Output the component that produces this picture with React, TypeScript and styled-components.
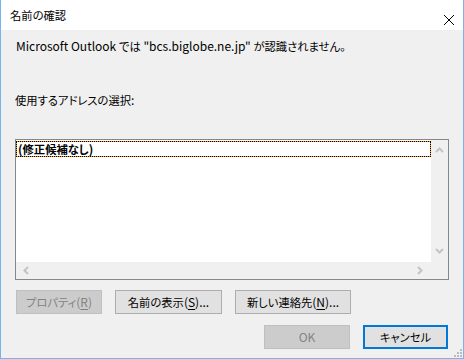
import styled, { createGlobalStyle, css } from "styled-components";

const GlobalStyle = createGlobalStyle`
  html, body {
    margin: 0;
    padding: 0;
    background: #f0f0f0;
  }
  * {
    box-sizing: border-box;
  }
`;

// ===== styled-components =====

const Window = styled.div`
  position: relative;
  width: 464px;
  height: 359px;
  display: flex;
  flex-direction: column;
  background: #f0f0f0;
  border: 1px solid #78b4ec;
  border-top: none;
  font-family: "Noto Sans CJK JP", "Noto Sans", sans-serif;
  font-feature-settings: "palt";
  font-size: 12px;
  color: #000;
`;

const TitleBar = styled.div`
  height: 30px;
  flex: none;
  display: flex;
  align-items: center;
  justify-content: space-between;
  background: #ffffff;
  padding: 0 9px 0 9px;
`;

const Title = styled.span`
  line-height: 16px;
`;

// CJK runs are a touch narrower in the original UI font
const Ja = styled.span`
  font-size: 11.3px;
`;

const CloseButton = styled.div`
  width: 10px;
  height: 10px;
  margin-top: 1px;
`;

const Body = styled.div`
  flex: 1;
  display: flex;
  flex-direction: column;
  padding: 8px 15px 0 14px;
`;

const Message = styled.div`
  line-height: 16px;
  padding-left: 1px;
`;

const Label = styled.div`
  line-height: 16px;
  margin-top: 38px;
`;

const ListBox = styled.div`
  margin-top: 31px;
  width: 434px;
  height: 141px;
  border: 1px solid #828790;
  display: grid;
  grid-template-columns: 1fr 17px;
  grid-template-rows: 1fr 17px;
  background: #ffffff;
`;

const Items = styled.div`
  padding: 1px 0 0 0;
`;

const Item = styled.div`
  height: 16px;
  line-height: 14px;
  padding-left: 1px;
  font-weight: bold;
  border: 1px dotted #000;
  background: linear-gradient(#ffffff, #ffffff) padding-box, #f39a1e border-box;
`;

const VScroll = styled.div`
  background: #f0f0f0;
  display: flex;
  flex-direction: column;
  justify-content: space-between;
  align-items: center;
  padding: 6px 0 6px 0;
`;

const HScroll = styled.div`
  background: #f0f0f0;
  display: flex;
  justify-content: space-between;
  align-items: center;
  padding: 0 6px 0 6px;
`;

const Corner = styled.div`
  background: #f0f0f0;
`;

const ButtonRow = styled.div<{ $end?: boolean }>`
  display: flex;
  gap: 13px;
  justify-content: ${({ $end }) => ($end ? "flex-end" : "flex-start")};
  padding-left: ${({ $end }) => ($end ? "0" : "1px")};
  margin-top: ${({ $end }) => ($end ? "11px" : "10px")};
`;

const Button = styled.div<{ $w: number; $disabled?: boolean; $default?: boolean }>`
  width: ${({ $w }) => $w}px;
  height: 24px;
  display: flex;
  align-items: center;
  justify-content: center;
  background: #e1e1e1;
  border: 1px solid #adadad;
  line-height: 16px;
  padding-bottom: 1px;

  ${({ $disabled }) =>
    $disabled &&
    css`
      background: #cccccc;
      border-color: #bfbfbf;
      color: #838383;
    `}

  ${({ $default }) =>
    $default &&
    css`
      border: 2px solid #0078d7;
    `}
`;

const Key = styled.span`
  text-decoration: underline;
  text-underline-offset: 2px;
`;

const Grip = styled.svg`
  position: absolute;
  right: 1px;
  bottom: 1px;
`;

// ===== icons =====

function Chevron({ dir }: { dir: "up" | "down" | "left" | "right" }) {
  const paths: Record<string, string> = {
    up: "M1 6 L4.5 2.5 L8 6",
    down: "M1 2 L4.5 5.5 L8 2",
    left: "M6 1 L2.5 4.5 L6 8",
    right: "M2 1 L5.5 4.5 L2 8",
  };
  return (
    <svg width="9" height="9" viewBox="0 0 9 9">
      <path d={paths[dir]} fill="none" stroke="#c4c4c4" strokeWidth="2" />
    </svg>
  );
}

// ===== component =====

export default function App() {
  return (
    <>
      <GlobalStyle />
      <Window>
        <TitleBar>
          <Title>
            <Ja>名前の確認</Ja>
          </Title>
          <CloseButton>
            <svg width="10" height="10" viewBox="0 0 10 10">
              <path d="M0 0 L10 10 M10 0 L0 10" stroke="#000" strokeWidth="1" />
            </svg>
          </CloseButton>
        </TitleBar>

        <Body>
          <Message>
            Microsoft Outlook <Ja>では</Ja> "bcs.biglobe.ne.jp" <Ja>が認識されません。</Ja>
          </Message>
          <Label>
            <Ja>使用するアドレスの選択</Ja>:
          </Label>

          <ListBox>
            <Items>
              <Item>
                (<Ja>修正候補なし</Ja>)
              </Item>
            </Items>
            <VScroll>
              <Chevron dir="up" />
              <Chevron dir="down" />
            </VScroll>
            <HScroll>
              <Chevron dir="left" />
              <Chevron dir="right" />
            </HScroll>
            <Corner />
          </ListBox>

          <ButtonRow>
            <Button $w={86} $disabled>
              <Ja>プロパティ</Ja>(<Key>R</Key>)
            </Button>
            <Button $w={107}>
              <Ja>名前の表示</Ja>(<Key>S</Key>)...
            </Button>
            <Button $w={116}>
              <Ja>新しい連絡先</Ja>(<Key>N</Key>)...
            </Button>
          </ButtonRow>

          <ButtonRow $end>
            <Button $w={86} $disabled>
              OK
            </Button>
            <Button $w={85} $default>
              <Ja>キャンセル</Ja>
            </Button>
          </ButtonRow>
        </Body>

        <Grip width="8" height="8" viewBox="0 0 8 8">
          <rect x="6" y="0" width="2" height="2" fill="#bcbcbc" />
          <rect x="3" y="3" width="2" height="2" fill="#bcbcbc" />
          <rect x="6" y="3" width="2" height="2" fill="#bcbcbc" />
          <rect x="0" y="6" width="2" height="2" fill="#bcbcbc" />
          <rect x="3" y="6" width="2" height="2" fill="#bcbcbc" />
          <rect x="6" y="6" width="2" height="2" fill="#bcbcbc" />
        </Grip>
      </Window>
    </>
  );
}
